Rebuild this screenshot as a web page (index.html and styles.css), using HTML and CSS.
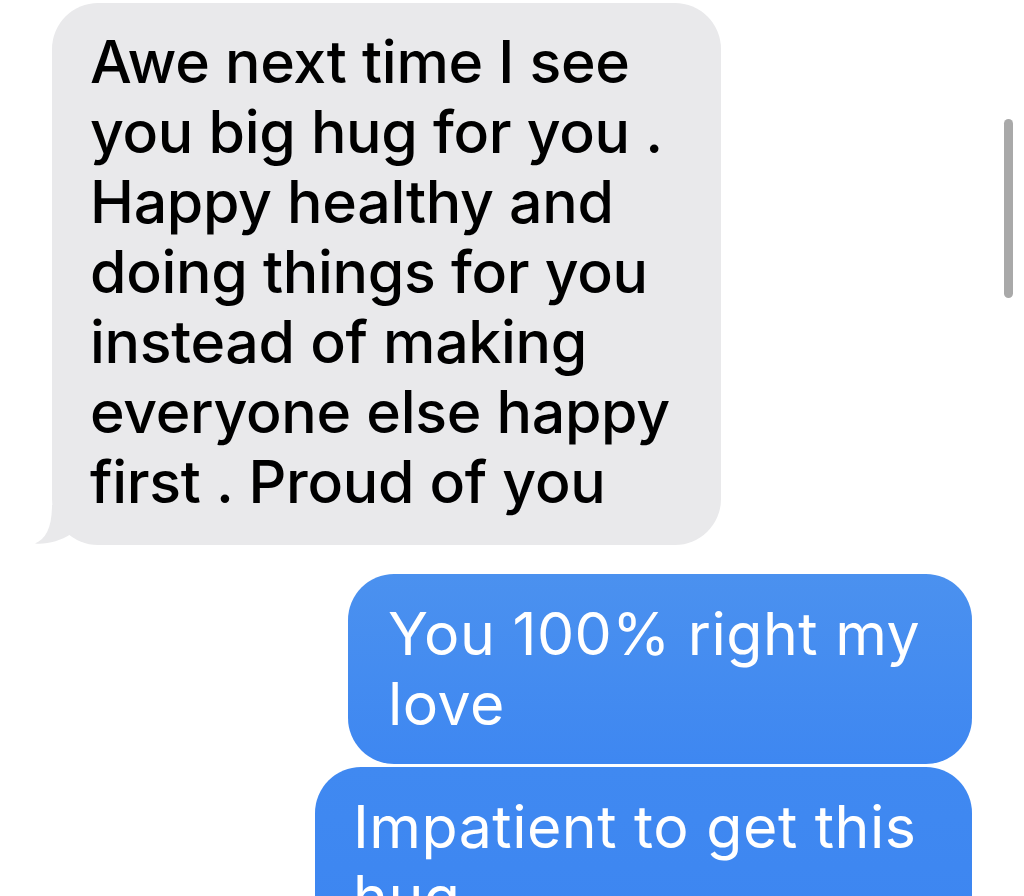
FILE: index.html
```html
<!DOCTYPE html>
<html>
<head>
<meta charset="utf-8">
<link rel="stylesheet" href="styles.css">
</head>
<body>
<div class="thread">
  <div class="bubble received">
    <p class="msg">Awe next time I see<br>you big hug for you .<br>Happy healthy and<br>doing things for you<br>instead of making<br>everyone else happy<br>first . Proud of you</p>
    <svg class="tail" width="40" height="40" viewBox="0 0 40 40">
      <path d="M17 0 C17 22 11 34 0 38.5 C12 39.5 25 36 36 29 L36 0 Z" fill="#e9e9eb"/>
    </svg>
  </div>
  <div class="bubble sent first">
    <p class="msg">You 100% right my<br>love</p>
  </div>
  <div class="bubble sent second">
    <p class="msg">Impatient to get this<br>hug</p>
  </div>
</div>
<div class="scrollbar"></div>
</body>
</html>
```
FILE: styles.css
```css
html, body {
  margin: 0;
  padding: 0;
  background: #ffffff;
  height: 896px;
  overflow: hidden;
}
.thread {
  display: flex;
  flex-direction: column;
  padding-top: 3px;
}
.bubble {
  position: relative;
  border-radius: 46px;
  box-sizing: border-box;
}
.msg {
  margin: 0;
  line-height: 70px;
}
.received {
  align-self: flex-start;
  margin-left: 52px;
  width: 669px;
  height: 542px;
  background: #e9e9eb;
  padding: 24px 0 0 38px;
}
.received .msg {
  font-family: "Inter", "Noto Sans", sans-serif;
  font-weight: 550;
  font-size: 59px;
  color: #000;
  letter-spacing: -0.3px;
}
.tail {
  position: absolute;
  left: -17px;
  bottom: 0;
}
.sent {
  align-self: flex-end;
  margin-right: 52px;
  background: linear-gradient(#4b91ef, #3e87f1);
}
.sent .msg {
  font-family: "Inter", "Noto Sans", sans-serif;
  font-weight: 400;
  font-size: 59px;
  color: #fff;
  letter-spacing: 0.5px;
}
.first {
  margin-top: 29px;
  width: 624px;
  height: 190px;
  padding: 25px 0 0 40px;
}
.second {
  margin-top: 3px;
  width: 657px;
  height: 200px;
  padding: 25px 0 0 38px;
  background: linear-gradient(#4089f1, #3c85f1);
}
.scrollbar {
  position: absolute;
  left: 1004px;
  top: 119px;
  width: 9px;
  height: 179px;
  border-radius: 5px;
  background: #a9a9a9;
}
```
